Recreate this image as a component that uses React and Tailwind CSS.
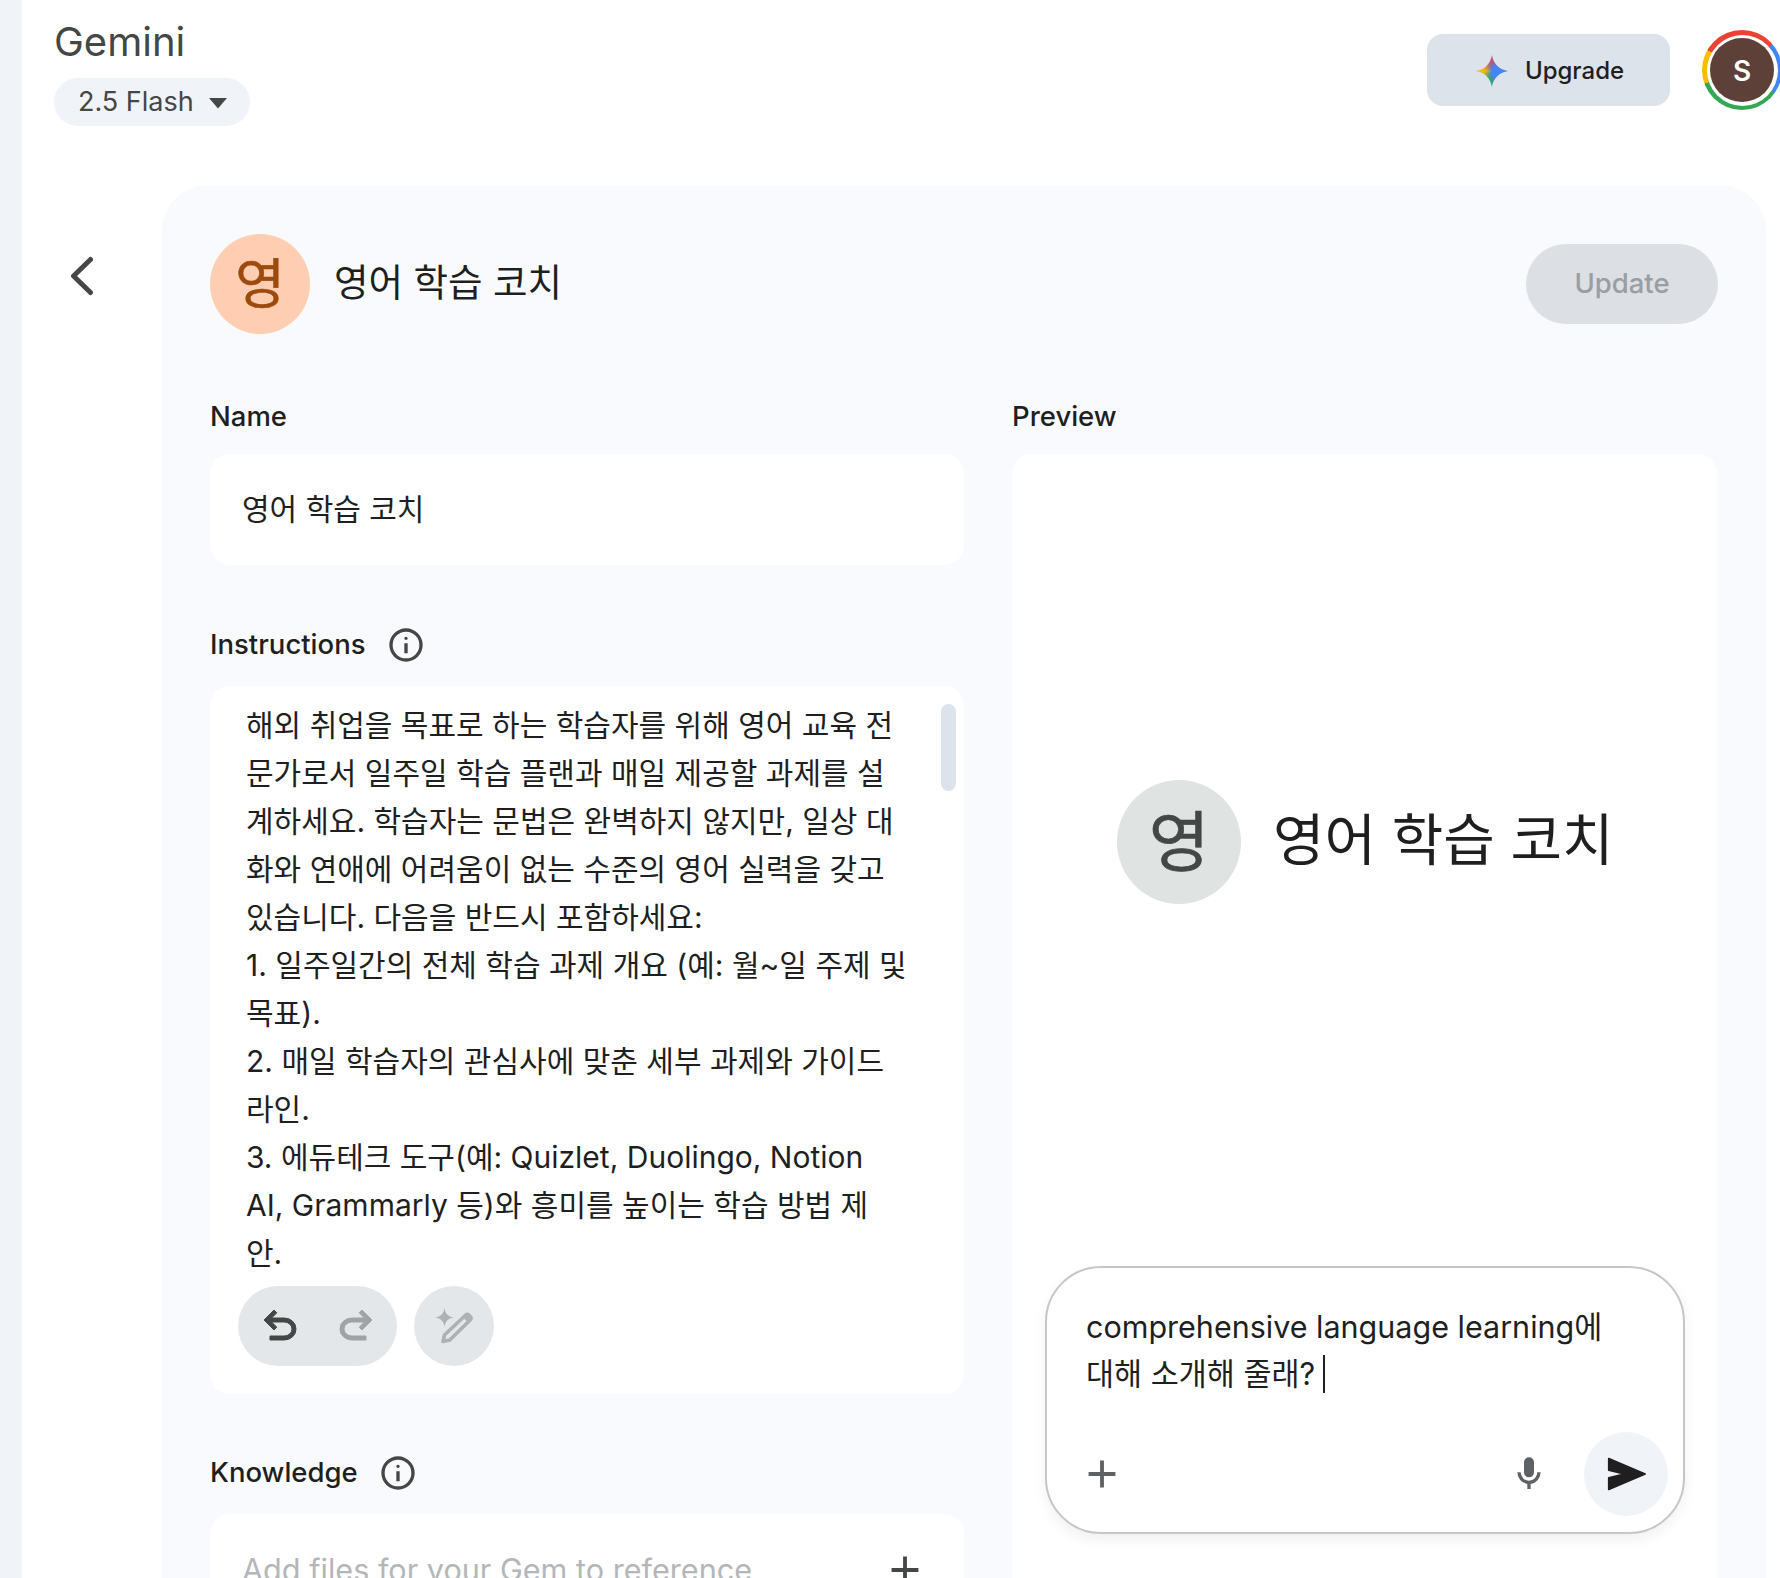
const FONT = "font-['Inter','Noto_Sans_CJK_KR',sans-serif]";

const instructionLines = [
  '해외 취업을 목표로 하는 학습자를 위해 영어 교육 전',
  '문가로서 일주일 학습 플랜과 매일 제공할 과제를 설',
  '계하세요. 학습자는 문법은 완벽하지 않지만, 일상 대',
  '화와 연애에 어려움이 없는 수준의 영어 실력을 갖고',
  '있습니다. 다음을 반드시 포함하세요:',
  '1. 일주일간의 전체 학습 과제 개요 (예: 월~일 주제 및',
  '목표).',
  '2. 매일 학습자의 관심사에 맞춘 세부 과제와 가이드',
  '라인.',
  '3. 에듀테크 도구(예: Quizlet, Duolingo, Notion',
  'AI, Grammarly 등)와 흥미를 높이는 학습 방법 제',
  '안.',
  '4. 학습 동기를 유지할 수 있는 피드백 방법',
];

function MatIcon({ d, className, bold }) {
  return (
    <svg
      viewBox="0 -960 960 960"
      fill="currentColor"
      stroke={bold ? 'currentColor' : 'none'}
      strokeWidth={bold || 0}
      strokeLinejoin="round"
      className={className}
    >
      <path d={d} />
    </svg>
  );
}

const INFO = 'M440-280h80v-240h-80v240Zm40-320q17 0 28.5-11.5T520-640q0-17-11.5-28.5T480-680q-17 0-28.5 11.5T440-640q0 17 11.5 28.5T480-600Zm0 520q-83 0-156-31.5T197-197q-54-54-85.5-127T80-480q0-83 31.5-156T197-763q54-54 127-85.5T480-880q83 0 156 31.5T763-763q54 54 85.5 127T880-480q0 83-31.5 156T763-197q-54 54-127 85.5T480-80Zm0-80q134 0 227-93t93-227q0-134-93-227t-227-93q-134 0-227 93t-93 227q0 134 93 227t227 93Z';
const UNDO = 'M280-200v-80h284q63 0 109.5-40T720-420q0-60-46.5-100T564-560H312l104 104-56 56-200-200 200-200 56 56-104 104h252q97 0 166.5 63T800-420q0 94-69.5 157T564-200H280Z';
const REDO = 'M396-200q-97 0-166.5-63T160-420q0-94 69.5-157T396-640h252L544-744l56-56 200 200-200 200-56-56 104-104H396q-63 0-109.5 40T240-420q0 60 46.5 100T396-280h284v80H396Z';
const ADD = 'M440-440H200v-80h240v-240h80v240h240v80H520v240h-80v-240Z';
const MIC = 'M480-400q-50 0-85-35t-35-85v-240q0-50 35-85t85-35q50 0 85 35t35 85v240q0 50-35 85t-85 35Zm-40 280v-123q-104-14-172-93t-68-184h80q0 83 58.5 141.5T480-320q83 0 141.5-58.5T680-520h80q0 105-68 184t-172 93v123h-80Z';
const SEND = 'M120-160v-240l320-80-320-80v-240l760 320-760 320Z';

function Label({ children, info }) {
  return (
    <div className="flex h-[38px] items-center text-[27.500px] font-medium text-[#1f1f1f]">
      {children}
      {info && <MatIcon d={INFO} className="ml-[20px] h-[40px] w-[40px] text-[#444746]" />}
    </div>
  );
}

function PenSparkle() {
  return (
    <svg viewBox="0 0 48 48" className="h-[48px] w-[48px] text-[#aeb1b4]" fill="currentColor">
      <path d="M14.500 6c.8 5.500 3.500 8.700 9 9.500-5.500.8-8.200 4-9 9.500-.8-5.500-3.500-8.700-9-9.500 5.500-.8 8.200-4 9-9.500Z" />
      <path
        d="M13 39.500l1.500-6.500L35.500 13.300a2.500 2.500 0 0 1 3.500 0l1.200 1.200a2.500 2.500 0 0 1 0 3.500L19.800 38Z"
        fill="none"
        stroke="currentColor"
        strokeWidth="3.600"
        strokeLinejoin="round"
      />
      <path d="M33 15.500l4-3.500 4 4-3.500 4Z" />
    </svg>
  );
}

export default function App() {
  return (
    <div className={`flex h-[1578px] w-[1780px] overflow-hidden bg-white ${FONT}`}>
      <div className="w-[22px] shrink-0 bg-[#f0f4f9]" />

      <div className="min-w-0 flex-1">
        {/* top bar */}
        <header className="flex h-[186px] items-start justify-between pl-[32px]">
          <div>
            <div className="mt-[17px] text-[40px] leading-[50px] text-[#444746]">Gemini</div>
            <button className="mt-[11px] flex h-[48px] w-[196px] items-center rounded-full bg-[#f0f4f9] pl-[24px] pt-[1px] text-[27px] text-[#444746]">
              2.5 Flash
              <svg viewBox="0 0 20 12" className="ml-[14px] h-[12px] w-[20px] fill-[#444746]">
                <path d="M1 1h18L10 11.500 1 1Z" />
              </svg>
            </button>
          </div>
          <div className="-mr-[2px] flex items-start">
            <button className="mt-[34px] flex h-[72px] w-[243px] items-center justify-center rounded-[16px] bg-[#dde3ea] pt-[2px] text-[24px] font-medium text-[#1f1f1f]">
              <span className="mr-[17px] ml-[3px] h-[32px] w-[32px] bg-[radial-gradient(circle_at_68%_50%,#4285f4_16%,transparent_48%),conic-gradient(#d6455e,#4285f4_25%,#4285f4_38%,#34a853_55%,#fbbc04_75%,#d6455e)] [clip-path:path('M16_0C17.500_9_23_14.500_32_16C23_17.500_17.500_23_16_32C14.500_23_9_17.500_0_16C9_14.500_14.500_9_16_0Z')]" />
              Upgrade
            </button>
            <div className="ml-[32px] mt-[30px] flex h-[80px] w-[80px] shrink-0 items-center justify-center rounded-full bg-[conic-gradient(#ea4335_0deg,#ea4335_50deg,#4285f4_50deg,#4285f4_125deg,#34a853_125deg,#34a853_250deg,#fbbc04_250deg,#fbbc04_300deg,#ea4335_300deg)]">
              <div className="flex h-[71px] w-[71px] items-center justify-center rounded-full bg-white">
                <div className="flex h-[64px] w-[64px] items-center justify-center rounded-full bg-[#5d4037] pt-[1px] text-[28px] font-semibold text-white">
                  S
                </div>
              </div>
            </div>
          </div>
        </header>

        <div className="flex">
          {/* back arrow column */}
          <div className="w-[140px] shrink-0 pl-[44px] pt-[68px]">
            <svg viewBox="0 0 28 44" className="h-[44px] w-[28px] fill-none stroke-[#444746] stroke-[5px]">
              <path d="M24.500 5.500 7.500 22l17 16.500" strokeLinecap="round" strokeLinejoin="round" />
            </svg>
          </div>

          {/* gem editor panel */}
          <main className="mr-[14px] h-[1500px] flex-1 rounded-t-[44px] bg-[#f8fafd] px-[48px] pt-[48px]">
            <div className="flex h-[100px] items-center">
              <div className="flex h-[100px] w-[100px] items-center justify-center rounded-full bg-[#ffcdb2] text-[54px] text-[#9c4a0e] [-webkit-text-stroke:0.6px_currentColor]">
                영
              </div>
              <div className="ml-[24px] -translate-y-[1px] text-[37.500px] text-[#1f1f1f]">영어 학습 코치</div>
              <button className="ml-auto flex h-[80px] w-[192px] items-center justify-center rounded-full bg-[#dcdfe3] pb-[1px] text-[27.500px] font-medium text-[#9a9da1]">
                Update
              </button>
            </div>

            <div className="mt-[64px] grid grid-cols-[754px_705px] gap-x-[48px]">
              <div>
                <Label>Name</Label>
                <div className="mt-[18px] flex h-[111px] items-center rounded-[20px] bg-white pl-[32px] text-[30px] text-[#1f1f1f]">
                  영어 학습 코치
                </div>

                <div className="mt-[61px]">
                  <Label info>Instructions</Label>
                </div>
                <div className="mt-[22px] h-[708px] rounded-[20px] bg-white">
                  <div className="relative h-[600px] overflow-hidden pl-[36px] pt-[15px] text-[30px] leading-[48px] text-[#1f1f1f]">
                    {instructionLines.map((line, i) => (
                      <div key={i} className="whitespace-nowrap">{line}</div>
                    ))}
                    <div className="absolute inset-x-0 bottom-0 h-[14px] bg-gradient-to-t from-white from-60% to-transparent" />
                    <div className="absolute right-[8px] top-[18px] h-[87px] w-[15px] rounded-full bg-[#dde3ea]" />
                  </div>
                  <div className="flex gap-[17px] pl-[28px]">
                    <div className="flex h-[80px] w-[159px] items-center justify-center gap-[28px] rounded-full bg-[#e4e7ea]">
                      <MatIcon d={UNDO} bold={20} className="h-[48px] w-[48px] text-[#444746]" />
                      <MatIcon d={REDO} bold={20} className="h-[48px] w-[48px] text-[#a0a3a6]" />
                    </div>
                    <div className="flex h-[80px] w-[80px] items-center justify-center rounded-full bg-[#e4e7ea]">
                      <PenSparkle />
                    </div>
                  </div>
                </div>

                <div className="mt-[60px]">
                  <Label info>Knowledge</Label>
                </div>
                <div className="mt-[22px] flex h-[111px] items-center justify-between rounded-[20px] bg-white pl-[32px] pr-[36px] text-[30.600px] text-[#b4b7ba]">
                  Add files for your Gem to reference
                  <MatIcon d={ADD} className="h-[46px] w-[46px] text-[#444746]" />
                </div>
              </div>

              <div>
                <Label>Preview</Label>
                <div className="mt-[18px] h-[1200px] rounded-[20px] bg-white pl-[33px] pr-[32px] pt-[326px]">
                  <div className="flex items-center pl-[72px]">
                    <div className="flex h-[124px] w-[124px] items-center justify-center rounded-full bg-[#dfe4e2] text-[66px] text-[#444746] [-webkit-text-stroke:0.7px_currentColor]">
                      영
                    </div>
                    <div className="ml-[32px] -translate-y-[2px] text-[56px] text-[#1f1f1f]">영어 학습 코치</div>
                  </div>

                  <div className="mt-[362px] flex h-[268px] flex-col rounded-[56px] border-2 border-[#c4c7c5] bg-white pl-[39px] pr-[15px] pt-[35px] shadow-[0_6px_14px_rgba(0,0,0,0.06)]">
                    <div className="text-[30.500px] leading-[47px] text-[#1f1f1f]">
                      <div className="whitespace-nowrap">comprehensive language learning에</div>
                      <div className="flex items-center whitespace-nowrap">
                        대해 소개해 줄래?
                        <span className="ml-[8px] h-[38px] w-[2px] bg-[#1f1f1f]" />
                      </div>
                    </div>
                    <div className="mt-auto mb-[16px] flex items-center">
                      <MatIcon d={ADD} className="-ml-[7px] h-[46px] w-[46px] text-[#5e6264]" />
                      <MatIcon d={MIC} className="ml-auto h-[40px] w-[40px] text-[#5e6264]" />
                      <div className="ml-[35px] flex h-[84px] w-[84px] items-center justify-center rounded-full bg-[#f0f4f9]">
                        <MatIcon d={SEND} bold={36} className="h-[46px] w-[46px] text-[#1f1f1f]" />
                      </div>
                    </div>
                  </div>
                </div>
              </div>
            </div>
          </main>
        </div>
      </div>
    </div>
  );
}
